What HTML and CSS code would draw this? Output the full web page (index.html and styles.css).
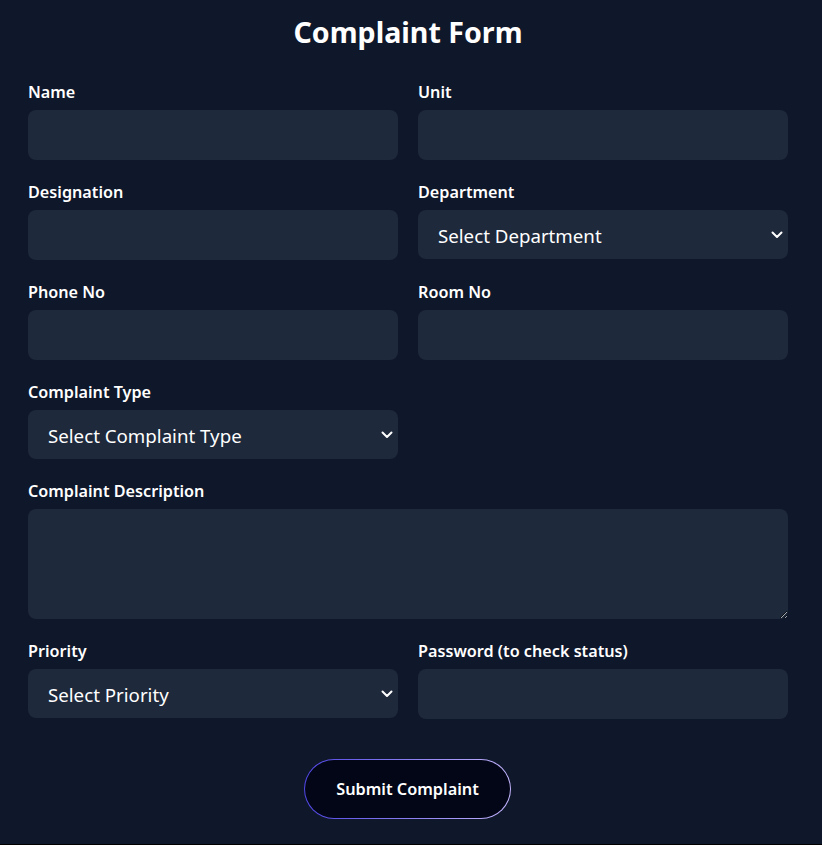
FILE: index.html
```html
<!DOCTYPE html>
<html lang="en">
<head>
<meta charset="utf-8">
<title>Complaint Form</title>
<link rel="stylesheet" href="styles.css">
</head>
<body>
<main class="page">
  <h1 class="title">Complaint Form</h1>
  <form class="form">
    <div class="field">
      <label class="label">Name</label>
      <input class="control" type="text">
    </div>
    <div class="field">
      <label class="label">Unit</label>
      <input class="control" type="text">
    </div>
    <div class="field">
      <label class="label">Designation</label>
      <input class="control" type="text">
    </div>
    <div class="field">
      <label class="label">Department</label>
      <div class="select-wrap">
        <select class="control select"><option>Select Department</option></select>
        <svg class="chevron" width="12" height="8" viewBox="0 0 12 8"><path d="M1.5 1.5 L6 6 L10.5 1.5" fill="none" stroke="#fff" stroke-width="2" stroke-linecap="round" stroke-linejoin="round"/></svg>
      </div>
    </div>
    <div class="field">
      <label class="label">Phone No</label>
      <input class="control" type="text">
    </div>
    <div class="field">
      <label class="label">Room No</label>
      <input class="control" type="text">
    </div>
    <div class="field">
      <label class="label">Complaint Type</label>
      <div class="select-wrap">
        <select class="control select"><option>Select Complaint Type</option></select>
        <svg class="chevron" width="12" height="8" viewBox="0 0 12 8"><path d="M1.5 1.5 L6 6 L10.5 1.5" fill="none" stroke="#fff" stroke-width="2" stroke-linecap="round" stroke-linejoin="round"/></svg>
      </div>
    </div>
    <div class="field"></div>
    <div class="field wide">
      <label class="label">Complaint Description</label>
      <textarea class="control area"></textarea>
    </div>
    <div class="field">
      <label class="label">Priority</label>
      <div class="select-wrap">
        <select class="control select"><option>Select Priority</option></select>
        <svg class="chevron" width="12" height="8" viewBox="0 0 12 8"><path d="M1.5 1.5 L6 6 L10.5 1.5" fill="none" stroke="#fff" stroke-width="2" stroke-linecap="round" stroke-linejoin="round"/></svg>
      </div>
    </div>
    <div class="field">
      <label class="label">Password (to check status)</label>
      <input class="control" type="password">
    </div>
    <div class="actions">
      <button class="submit" type="button">Submit Complaint</button>
    </div>
  </form>
</main>
</body>
</html>
```
FILE: styles.css
```css
html {
  background: #000;
}
body {
  margin: 0;
  height: 844px;
  background: #0f172a;
  font-family: "Noto Sans", "Open Sans", sans-serif;
  color: #fff;
}
.page {
  width: 760px;
  margin-left: 28px;
  padding-top: 12px;
}
.title {
  margin: 0 0 28px;
  font-size: 28.6px;
  line-height: 40px;
  font-weight: 700;
  text-align: center;
}
.form {
  display: grid;
  grid-template-columns: 1fr 1fr;
  column-gap: 20px;
  row-gap: 20px;
}
.field {
  display: flex;
  flex-direction: column;
}
.wide {
  grid-column: 1 / 3;
}
.label {
  font-size: 16.2px;
  line-height: 23px;
  padding-top: 1px;
  font-weight: 600;
  margin-bottom: 6px;
}
.control {
  box-sizing: border-box;
  height: 50px;
  width: 100%;
  border: none;
  border-radius: 8px;
  background: #1e293b;
  color: #fff;
  font-family: inherit;
  font-size: 18.7px;
  padding: 0 20px;
  outline: none;
}
.select-wrap {
  position: relative;
}
.select {
  height: 49px;
  appearance: none;
  -webkit-appearance: none;
  display: block;
  padding-top: 1px;
}
.chevron {
  position: absolute;
  right: 5px;
  top: 21px;
}
.area {
  height: 110px;
  resize: vertical;
  padding: 12px 20px;
}
.actions {
  grid-column: 1 / 3;
  display: flex;
  justify-content: center;
  padding-top: 20px;
}
.submit {
  box-sizing: border-box;
  width: 207px;
  height: 60px;
  margin-left: -1px;
  border-radius: 30px;
  border: 1.5px solid transparent;
  background:
    linear-gradient(#020617, #020617) padding-box,
    linear-gradient(90deg, #4f46e5, #c4b5fd) border-box;
  color: #fff;
  font-family: inherit;
  font-size: 16.3px;
  font-weight: 600;
  cursor: pointer;
}
```
